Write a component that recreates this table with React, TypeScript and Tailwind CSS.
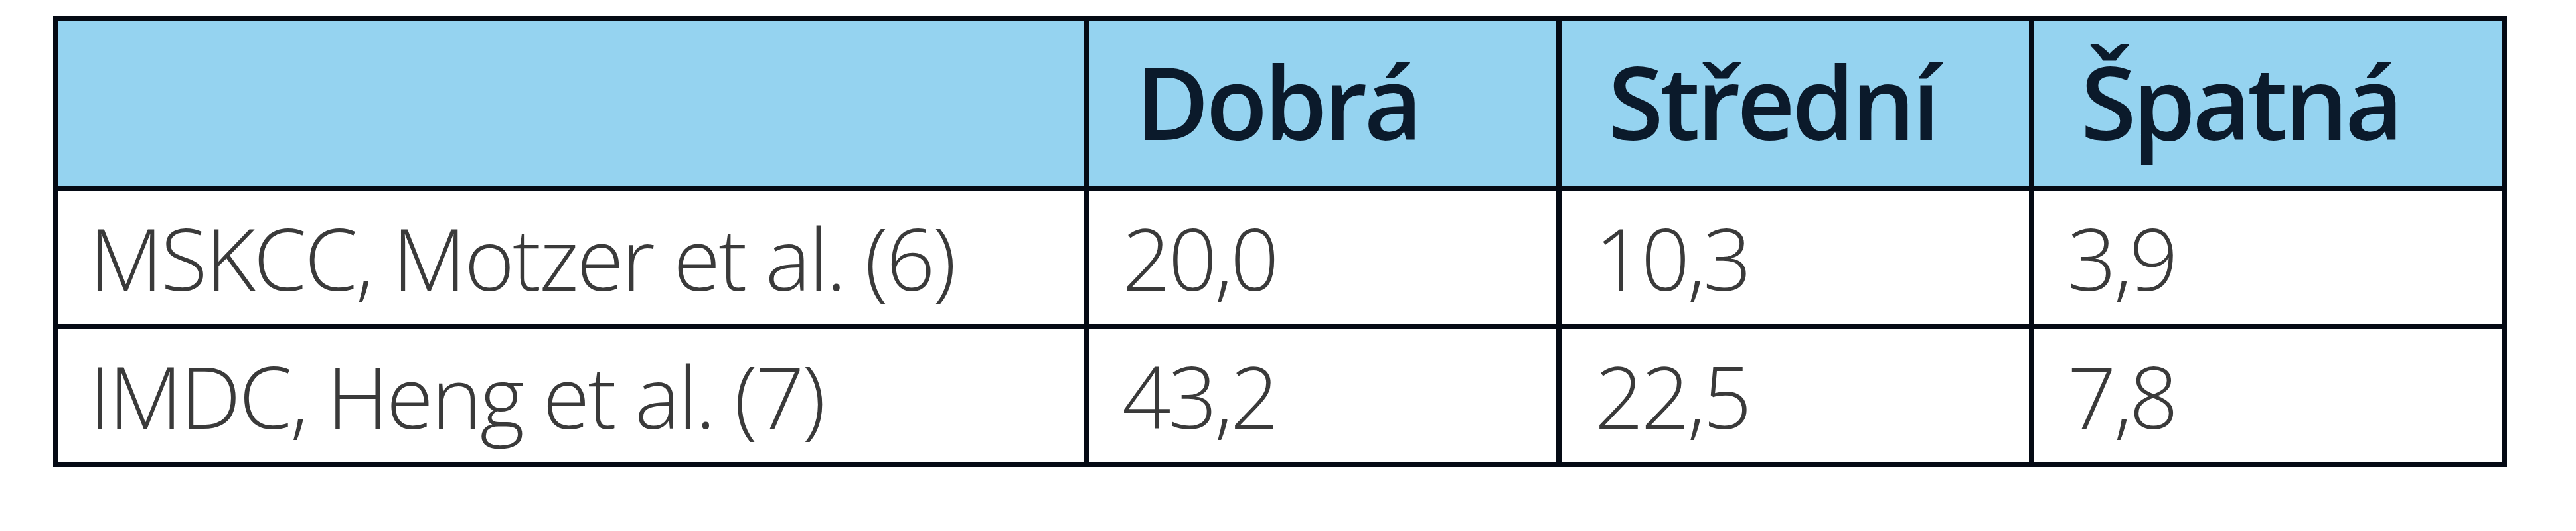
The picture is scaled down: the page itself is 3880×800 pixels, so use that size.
const header = ['Dobrá', 'Střední', 'Špatná']

const rows = [
  { label: 'MSKCC, Motzer et al. (6)', values: ['20,0', '10,3', '3,9'] },
  { label: 'IMDC, Heng et al. (7)', values: ['43,2', '22,5', '7,8'] },
]

export default function App() {
  return (
    <div className="w-[3880px] h-[800px] bg-white pt-[24px] pl-[80px] font-['Open_Sans',sans-serif]">
      <div className="w-[3696px] border-[8px] border-[#050a14] bg-[#050a14] grid grid-cols-[1544px_704px_704px_704px] grid-rows-[248px_200px_200px] gap-[8px]">
        {/* hlavička */}
        <div className="bg-[#95d3f0]" />
        {header.map((h) => (
          <div key={h} className="bg-[#95d3f0] flex items-center pl-[70px] pb-[6px]">
            <span className="text-[152px] leading-none font-semibold text-[#0b1a2b] tracking-[-5px]">{h}</span>
          </div>
        ))}

        {rows.map((r) => (
          <>
            <div key={r.label} className="bg-white flex items-center pl-[46px]">
              <span className="text-[129px] leading-none font-light text-[#3a3a3a] tracking-[-3px]">{r.label}</span>
            </div>
            {r.values.map((v, i) => (
              <div key={r.label + i} className="bg-white flex items-center pl-[50px]">
                <span className="text-[129px] leading-none font-light text-[#3a3a3a] tracking-[-4px]">{v}</span>
              </div>
            ))}
          </>
        ))}
      </div>
    </div>
  )
}
